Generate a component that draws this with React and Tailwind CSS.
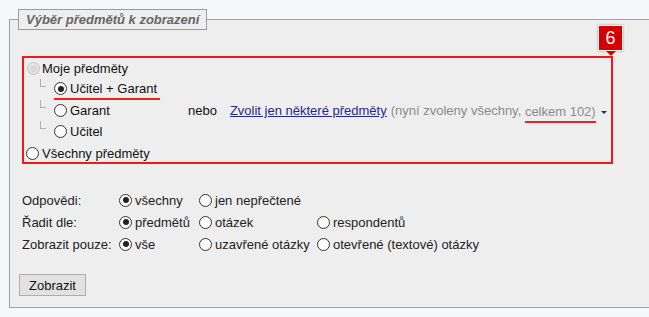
import React from 'react';

function Radio({ checked, disabled }) {
  if (disabled) {
    return (
      <span className="inline-flex w-[13px] h-[13px] shrink-0 rounded-full border border-[#c4c4c4] bg-[#e4e4e4] items-center justify-center">
        <span className="w-[7px] h-[7px] rounded-full bg-[#d8d8d8]" />
      </span>
    );
  }
  return (
    <span className="inline-flex w-[13px] h-[13px] shrink-0 rounded-full border border-[#333] bg-white items-center justify-center">
      {checked && <span className="w-[6px] h-[6px] rounded-full bg-[#222]" />}
    </span>
  );
}

function Option({ checked, children }) {
  return (
    <span className="inline-flex items-center gap-[3px]">
      <Radio checked={checked} />
      <span>{children}</span>
    </span>
  );
}

function Branch() {
  return <span className="self-start ml-[16px] mr-[8px] w-[6px] h-[8px] border-l border-b border-[#b0b0b0]" />;
}

export default function App() {
  const rows = [
    { label: 'Odpovědi:', opts: [['všechny', true], ['jen nepřečtené', false]] },
    { label: 'Řadit dle:', opts: [['předmětů', true], ['otázek', false], ['respondentů', false]] },
    { label: 'Zobrazit pouze:', opts: [['vše', true], ['uzavřené otázky', false], ['otevřené (textové) otázky', false]] },
  ];

  return (
    <div
      className="w-full h-[317px] overflow-hidden bg-[#f5f7fa] pl-[9px] pt-[9px] text-[13px] leading-[15px] text-[#111]"
      style={{ fontFamily: '"Liberation Sans", Arial, sans-serif' }}
    >
      <fieldset className="w-[660px] border border-[#a0a0a0] bg-[#eeeeee] pb-[11px]">
        <legend className="ml-[8px] h-[21px] px-[7px] border border-[#9a9a9a] bg-[#eeeeee] text-[13px] leading-[19px] font-bold italic text-[#666]">
          Výběr předmětů k zobrazení
        </legend>

        {/* Which subjects */}
        <div className="relative mt-[26px] ml-[12px] w-[591px] h-[108px] border-2 border-[#f01818]">
          <div className="absolute right-[-12px] top-[-33px] flex flex-col items-center">
            <div className="w-[25px] h-[26px] bg-[#d40000] border border-[#f0f0f0] shadow-[0_0_2px_rgba(0,0,0,0.35)] text-white text-[18px] leading-[24px] text-center">
              6
            </div>
            <span className="w-0 h-0 border-l-[5px] border-r-[5px] border-t-[5px] border-l-transparent border-r-transparent border-t-[#d40000]" />
          </div>

          <div className="flex items-center h-[21px] pl-[3px] gap-[2px]">
            <Radio disabled />
            <span>Moje předměty</span>
          </div>

          <div className="flex items-center h-[21px]">
            <Branch />
            <span className="inline-flex items-center gap-[3px] h-[21px] border-b-2 border-[#f02020] pr-[3px]">
              <Radio checked />
              <span>Učitel + Garant</span>
            </span>
          </div>

          <div className="flex items-center h-[21px]">
            <div className="flex items-center w-[164px] h-full">
              <Branch />
              <Option>Garant</Option>
            </div>
            <span>nebo</span>
            <a href="#" className="ml-[13px] text-[#1f2a86] underline">Zvolit jen některé předměty</a>
            <span className="ml-[4px] text-[#8a8a8a]">(nyní zvoleny všechny,&nbsp;</span>
            <span className="text-[#8a8a8a] border-b-2 border-[#f02020] pb-[2px] mt-[6px]">celkem 102)</span>
            <span className="ml-[5px] mt-[3px] w-0 h-0 border-l-[3px] border-r-[3px] border-t-[3px] border-l-transparent border-r-transparent border-t-[#1f2a86]" />
          </div>

          <div className="flex items-center h-[21px]">
            <Branch />
            <Option>Učitel</Option>
          </div>

          <div className="flex items-center h-[19px] pl-[2px] pt-[3px] gap-[3px]">
            <Radio />
            <span>Všechny předměty</span>
          </div>
        </div>

        {/* Filters */}
        <div className="mt-[25px] ml-[12px] text-[#222]">
          {rows.map(row => (
            <div key={row.label} className="grid grid-cols-[97px_80px_118px_auto] items-center h-[22px]">
              <span>{row.label}</span>
              {row.opts.map(([text, checked]) => (
                <Option key={text} checked={checked}>{text}</Option>
              ))}
            </div>
          ))}
        </div>

        <button
          type="button"
          className="mt-[19px] ml-[9px] w-[67px] h-[22px] bg-[#e1e1e1] border border-[#adadad] text-[#111] text-[13px]"
        >
          Zobrazit
        </button>
      </fieldset>
    </div>
  );
}
